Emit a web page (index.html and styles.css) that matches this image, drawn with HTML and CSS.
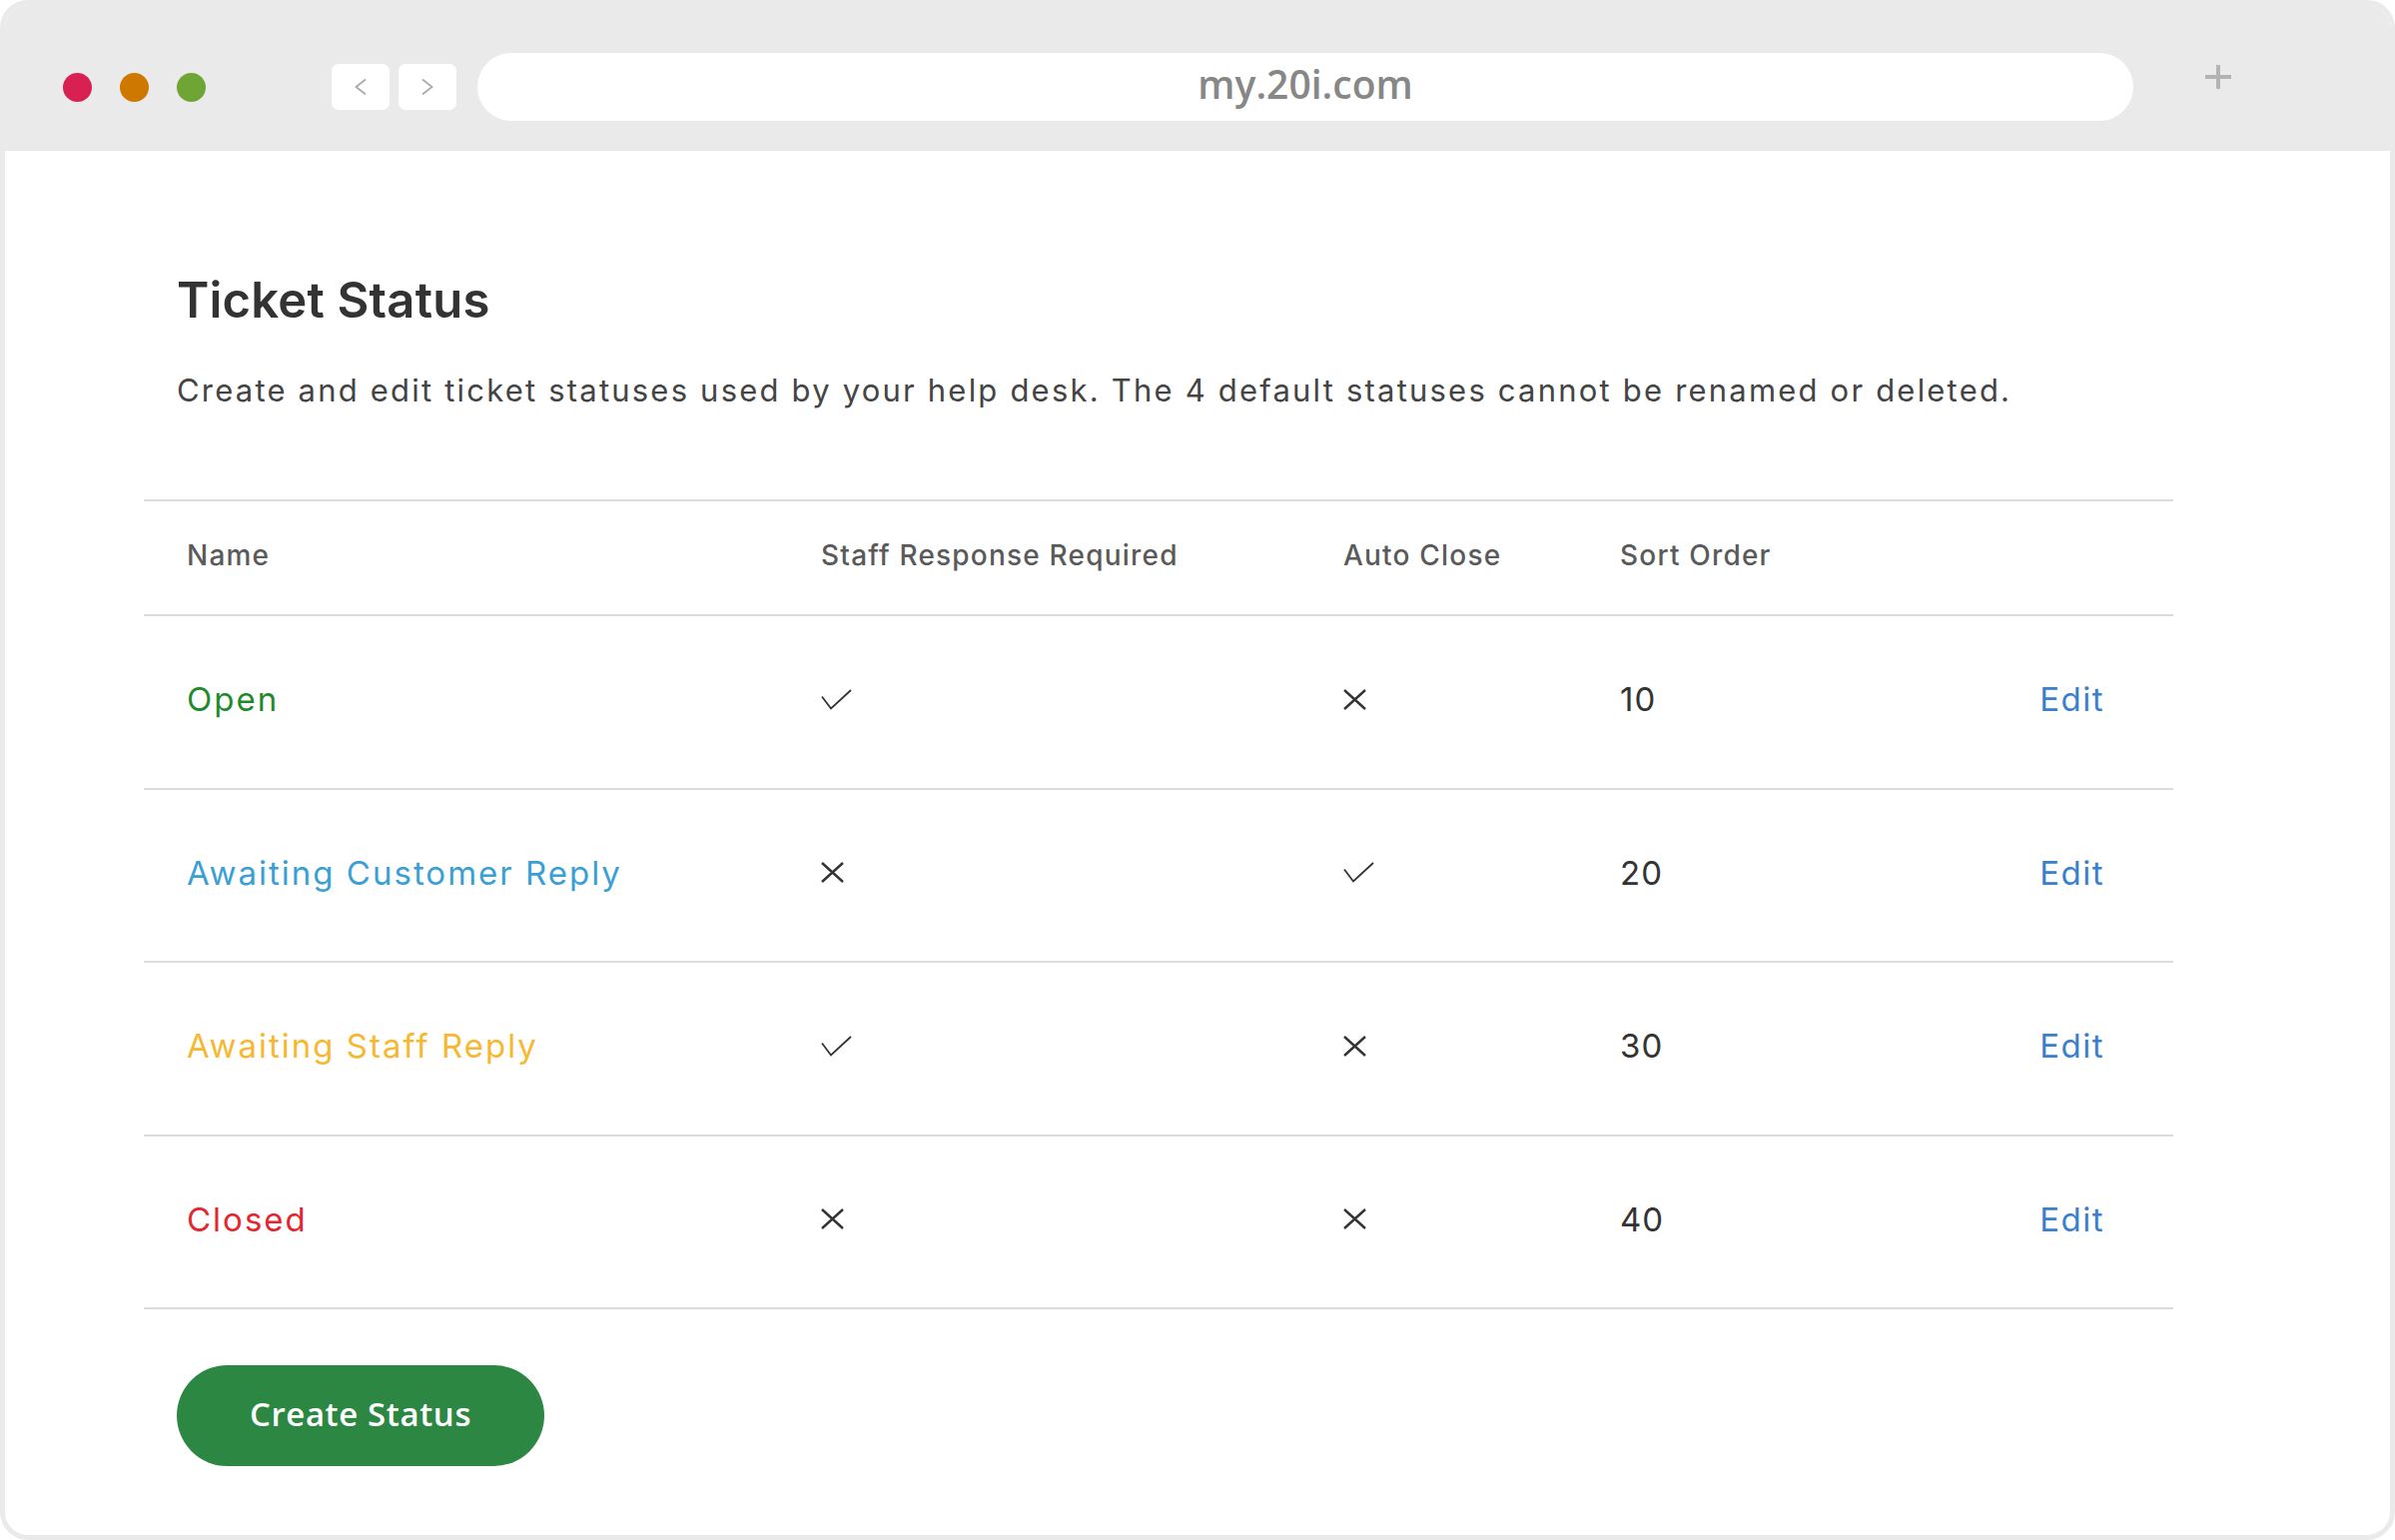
FILE: index.html
```html
<!DOCTYPE html>
<html lang="en">
<head>
<meta charset="utf-8">
<title>Ticket Status</title>
<link rel="stylesheet" href="styles.css">
</head>
<body>
<div class="browser">
  <header class="topbar">
    <div class="dots">
      <span class="dot dot-red"></span>
      <span class="dot dot-orange"></span>
      <span class="dot dot-green"></span>
    </div>
    <div class="nav">
      <span class="navbtn"><svg width="14" height="18" viewBox="0 0 14 18"><path d="M12 1.5 L2.5 9 L12 16.5" fill="none" stroke="#ababab" stroke-width="1.8"/></svg></span>
      <span class="navbtn"><svg width="14" height="18" viewBox="0 0 14 18"><path d="M2 1.5 L11.5 9 L2 16.5" fill="none" stroke="#ababab" stroke-width="1.8"/></svg></span>
    </div>
    <div class="url">my.20i.com</div>
    <div class="plus"><svg width="26" height="24" viewBox="0 0 26 24"><path d="M13 0 V24 M0 12 H26" stroke="#b3b3b3" stroke-width="4"/></svg></div>
  </header>

  <main class="page">
    <h1 class="title">Ticket Status</h1>
    <p class="intro">Create and edit ticket statuses used by your help desk. The 4 default statuses cannot be renamed or deleted.</p>

    <div class="table">
      <div class="row head">
        <div class="cell name">Name</div>
        <div class="cell">Staff Response Required</div>
        <div class="cell">Auto Close</div>
        <div class="cell">Sort Order</div>
        <div class="cell"></div>
      </div>

      <div class="row">
        <div class="cell name st-open">Open</div>
        <div class="cell"><svg class="ic-check" width="31" height="21" viewBox="0 0 31 21"><path d="M1 7.5 L10 19.5 L30 1" fill="none" stroke="#333" stroke-width="1.8"/></svg></div>
        <div class="cell"><svg class="ic-x" width="23" height="21" viewBox="0 0 23 21"><path d="M1 1 L22 20 M22 1 L1 20" fill="none" stroke="#333" stroke-width="2.4"/></svg></div>
        <div class="cell num">10</div>
        <div class="cell edit">Edit</div>
      </div>

      <div class="row">
        <div class="cell name st-customer">Awaiting Customer Reply</div>
        <div class="cell"><svg class="ic-x" width="23" height="21" viewBox="0 0 23 21"><path d="M1 1 L22 20 M22 1 L1 20" fill="none" stroke="#333" stroke-width="2.4"/></svg></div>
        <div class="cell"><svg class="ic-check" width="31" height="21" viewBox="0 0 31 21"><path d="M1 7.5 L10 19.5 L30 1" fill="none" stroke="#333" stroke-width="1.8"/></svg></div>
        <div class="cell num">20</div>
        <div class="cell edit">Edit</div>
      </div>

      <div class="row">
        <div class="cell name st-staff">Awaiting Staff Reply</div>
        <div class="cell"><svg class="ic-check" width="31" height="21" viewBox="0 0 31 21"><path d="M1 7.5 L10 19.5 L30 1" fill="none" stroke="#333" stroke-width="1.8"/></svg></div>
        <div class="cell"><svg class="ic-x" width="23" height="21" viewBox="0 0 23 21"><path d="M1 1 L22 20 M22 1 L1 20" fill="none" stroke="#333" stroke-width="2.4"/></svg></div>
        <div class="cell num">30</div>
        <div class="cell edit">Edit</div>
      </div>

      <div class="row">
        <div class="cell name st-closed">Closed</div>
        <div class="cell"><svg class="ic-x" width="23" height="21" viewBox="0 0 23 21"><path d="M1 1 L22 20 M22 1 L1 20" fill="none" stroke="#333" stroke-width="2.4"/></svg></div>
        <div class="cell"><svg class="ic-x" width="23" height="21" viewBox="0 0 23 21"><path d="M1 1 L22 20 M22 1 L1 20" fill="none" stroke="#333" stroke-width="2.4"/></svg></div>
        <div class="cell num">40</div>
        <div class="cell edit">Edit</div>
      </div>
    </div>

    <button class="create" type="button">Create Status</button>
  </main>
</div>
</body>
</html>
```

FILE: styles.css
```css
* { box-sizing: border-box; }

html, body {
  margin: 0;
  padding: 0;
  background: #ffffff;
}

body {
  font-family: "Inter", "Liberation Sans", sans-serif;
  color: #333;
}

.browser {
  width: 2398px;
  height: 1542px;
  border: 5px solid #eaeaea;
  border-radius: 28px;
  overflow: hidden;
  background: #ffffff;
  display: flex;
  flex-direction: column;
}

/* ---------- top bar ---------- */
.topbar {
  background: #eaeaea;
  height: 146px;
  padding: 48px 159px 30px 58px;
  display: flex;
  align-items: center;
  flex-shrink: 0;
}

.dots {
  display: flex;
  gap: 28px;
}

.dot {
  width: 29px;
  height: 29px;
  border-radius: 50%;
  display: block;
}
.dot-red { background: #d82152; }
.dot-orange { background: #cf7800; }
.dot-green { background: #6ea534; }

.nav {
  display: flex;
  gap: 9px;
  margin-left: 126px;
}

.navbtn {
  width: 58px;
  height: 46px;
  background: #ffffff;
  border-radius: 7px;
  display: flex;
  align-items: center;
  justify-content: center;
}

.url {
  flex: 1;
  margin-left: 21px;
  height: 68px;
  border-radius: 34px;
  background: #ffffff;
  display: flex;
  align-items: center;
  justify-content: center;
  padding-bottom: 7px;
  font-family: "Open Sans", "Liberation Sans", sans-serif;
  font-weight: 600;
  font-size: 39px;
  color: #878787;
}

.plus {
  margin-left: 72px;
  width: 26px;
  height: 24px;
  align-self: flex-start;
  margin-top: 12px;
  display: flex;
}

/* ---------- page ---------- */
.page {
  padding: 120px 0 0 139px;
}

.title {
  margin: 0;
  padding-left: 33px;
  font-size: 49px;
  line-height: 60px;
  font-weight: 600;
  color: #333333;
  letter-spacing: 0.2px;
}

.intro {
  margin: 40px 0 0;
  padding-left: 33px;
  font-size: 31px;
  line-height: 40px;
  font-weight: 400;
  color: #444444;
  letter-spacing: 2.2px;
}

.table {
  width: 2032px;
  margin-top: 89px;
  border-bottom: 2px solid #dcdcdc;
}

.row {
  display: grid;
  grid-template-columns: 678px 523px 277px 1fr auto;
  align-items: center;
  height: 173.5px;
  padding-right: 69px;
  padding-bottom: 5px;
  border-top: 2px solid #dcdcdc;
  font-size: 33px;
  letter-spacing: 2px;
  color: #333333;
}

.row.head {
  height: 115px;
  padding-bottom: 5px;
  font-size: 28px;
  font-weight: 500;
  color: #5a5a5a;
  letter-spacing: 1.2px;
}

.cell {
  display: flex;
  align-items: center;
}

.cell.name {
  padding-left: 43px;
}

.st-open { color: #1f8a2c; }
.st-customer { color: #3a9fd4; }
.st-staff { color: #f6b831; }
.st-closed { color: #e3262f; }

.num { color: #333333; letter-spacing: 1px; }

.edit {
  color: #3b80cc;
  justify-content: flex-end;
  letter-spacing: 1.5px;
}

.create {
  margin: 56px 0 0 33px;
  width: 368px;
  height: 101px;
  border: none;
  border-radius: 51px;
  background: #2b8742;
  color: #ffffff;
  font-family: "Open Sans", "Liberation Sans", sans-serif;
  font-weight: 600;
  font-size: 33px;
  letter-spacing: 0.6px;
  padding: 0 0 4px;
  cursor: pointer;
}
```
